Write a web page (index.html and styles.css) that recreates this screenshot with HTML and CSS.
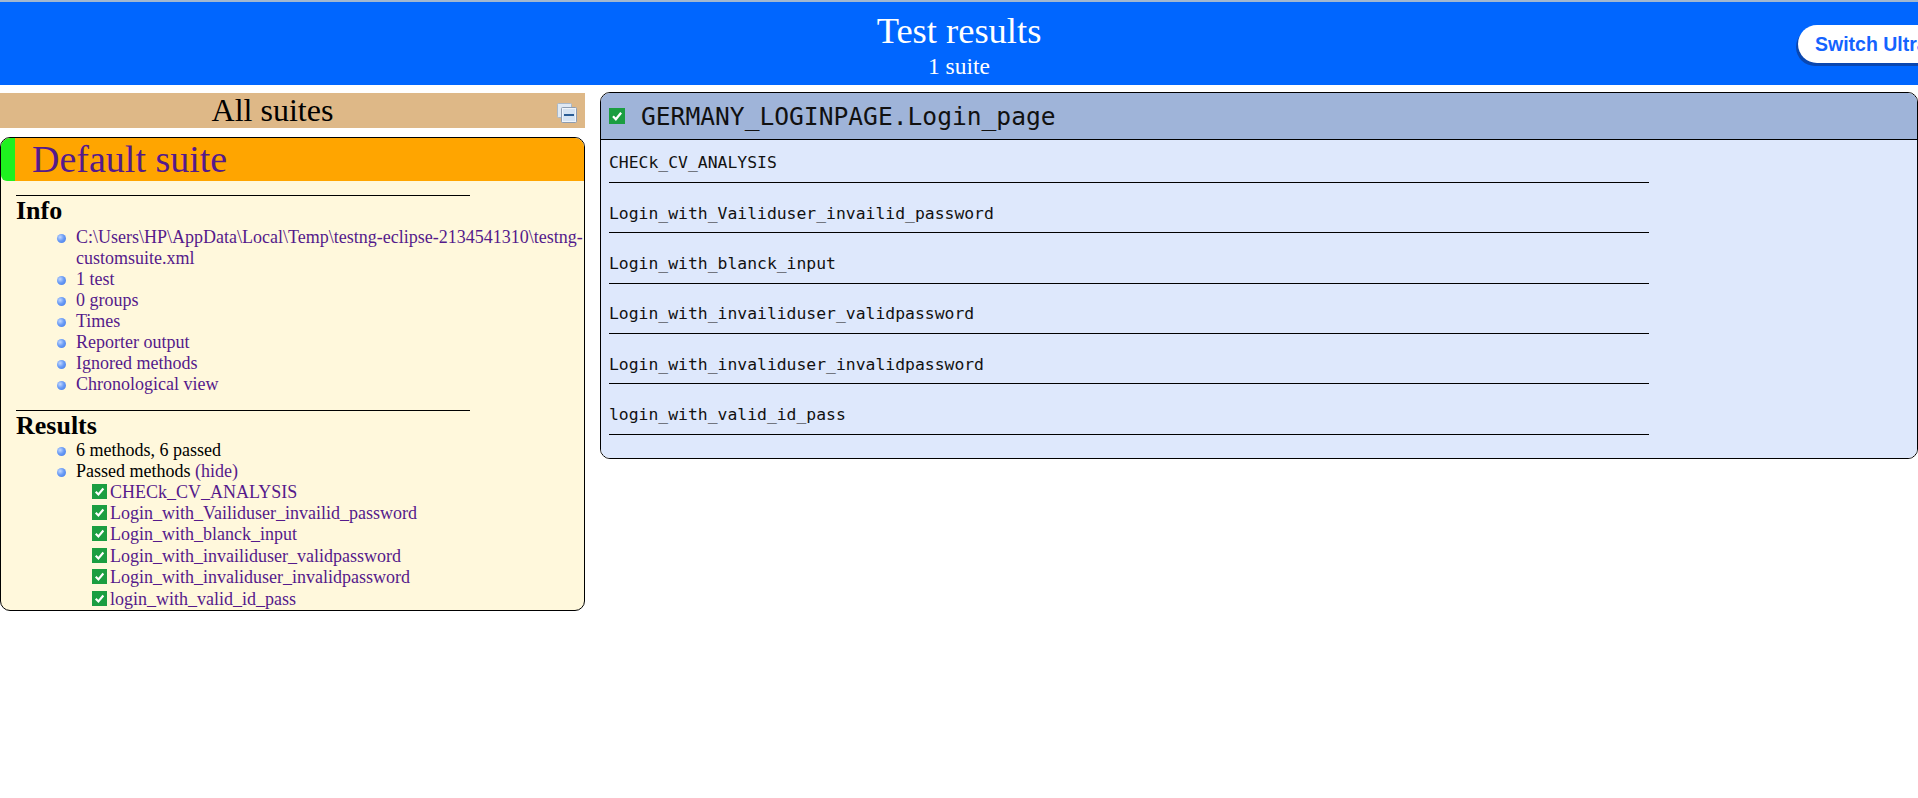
FILE: index.html
```html
<!DOCTYPE html>
<html>
<head>
<meta charset="utf-8">
<title>TestNG reports</title>
<link rel="stylesheet" href="styles.css">
</head>
<body>
<div class="top-banner">
  <div class="banner-title">Test results</div>
  <div class="banner-sub">1 suite</div>
  <button class="theme-button">Switch Ultra Theme</button>
</div>
<div class="main">
  <div class="navigator">
    <div class="nav-header">
      <span class="nav-title">All suites</span>
      <a class="collapse-all" href="#" title="Collapse/expand all the suites">
        <svg width="20" height="20" viewBox="0 0 20 20">
          <rect x="0.5" y="0.5" width="14" height="14" rx="1" fill="#dfe9f4" stroke="#a9b8c8"/>
          <rect x="4.5" y="4.5" width="15" height="15" rx="1" fill="#f0f5fb" stroke="#8d9db2"/>
          <rect x="6" y="6" width="12" height="12" fill="#d6e4f3"/>
          <rect x="7" y="11" width="10" height="2" fill="#2a5d95"/>
        </svg>
      </a>
    </div>
    <div class="suite">
      <div class="suite-header"><a class="suite-name" href="#">Default suite</a></div>
      <div class="suite-body">
        <div class="section-title">Info</div>
        <ul class="section-list">
          <li><a href="#">C:\Users\HP\AppData\Local\Temp\testng-eclipse-2134541310\testng-customsuite.xml</a></li>
          <li><a href="#">1 test</a></li>
          <li><a href="#">0 groups</a></li>
          <li><a href="#">Times</a></li>
          <li><a href="#">Reporter output</a></li>
          <li><a href="#">Ignored methods</a></li>
          <li><a href="#">Chronological view</a></li>
        </ul>
        <div class="section-title results-title">Results</div>
        <ul class="section-list">
          <li>6 methods, 6 passed</li>
          <li>Passed methods <a href="#">(hide)</a>
            <ul class="method-list">
              <li class="method-item"><svg class="check" width="15" height="15" viewBox="0 0 14 14"><rect width="14" height="14" fill="#1b9e41"/><path d="M3.5 7.2 L6 9.8 L10.6 4.2" fill="none" stroke="#fff" stroke-width="2"/></svg><a href="#">CHECk_CV_ANALYSIS</a></li>
              <li class="method-item"><svg class="check" width="15" height="15" viewBox="0 0 14 14"><rect width="14" height="14" fill="#1b9e41"/><path d="M3.5 7.2 L6 9.8 L10.6 4.2" fill="none" stroke="#fff" stroke-width="2"/></svg><a href="#">Login_with_Vailiduser_invailid_password</a></li>
              <li class="method-item"><svg class="check" width="15" height="15" viewBox="0 0 14 14"><rect width="14" height="14" fill="#1b9e41"/><path d="M3.5 7.2 L6 9.8 L10.6 4.2" fill="none" stroke="#fff" stroke-width="2"/></svg><a href="#">Login_with_blanck_input</a></li>
              <li class="method-item"><svg class="check" width="15" height="15" viewBox="0 0 14 14"><rect width="14" height="14" fill="#1b9e41"/><path d="M3.5 7.2 L6 9.8 L10.6 4.2" fill="none" stroke="#fff" stroke-width="2"/></svg><a href="#">Login_with_invailiduser_validpassword</a></li>
              <li class="method-item"><svg class="check" width="15" height="15" viewBox="0 0 14 14"><rect width="14" height="14" fill="#1b9e41"/><path d="M3.5 7.2 L6 9.8 L10.6 4.2" fill="none" stroke="#fff" stroke-width="2"/></svg><a href="#">Login_with_invaliduser_invalidpassword</a></li>
              <li class="method-item"><svg class="check" width="15" height="15" viewBox="0 0 14 14"><rect width="14" height="14" fill="#1b9e41"/><path d="M3.5 7.2 L6 9.8 L10.6 4.2" fill="none" stroke="#fff" stroke-width="2"/></svg><a href="#">login_with_valid_id_pass</a></li>
            </ul>
          </li>
        </ul>
      </div>
    </div>
  </div>
  <div class="main-panel">
    <div class="panel-header">
      <svg class="check" width="16" height="16" viewBox="0 0 14 14"><rect width="14" height="14" fill="#1b9e41"/><path d="M3.5 7.2 L6 9.8 L10.6 4.2" fill="none" stroke="#fff" stroke-width="2"/></svg>
      <span class="panel-title">GERMANY_LOGINPAGE.Login_page</span>
    </div>
    <div class="panel-content">
      <div class="method-row">CHECk_CV_ANALYSIS</div>
      <div class="method-row">Login_with_Vailiduser_invailid_password</div>
      <div class="method-row">Login_with_blanck_input</div>
      <div class="method-row">Login_with_invailiduser_validpassword</div>
      <div class="method-row">Login_with_invaliduser_invalidpassword</div>
      <div class="method-row">login_with_valid_id_pass</div>
    </div>
  </div>
</div>
</body>
</html>
```

FILE: styles.css
```css
* {
  box-sizing: border-box;
}

html,
body {
  margin: 0;
  padding: 0;
}

body {
  width: 1918px;
  height: 798px;
  overflow: hidden;
  background: #ffffff;
  color: #000000;
  font-family: "Liberation Serif", "Times New Roman", serif;
}

a {
  color: #551a8b;
  text-decoration: none;
}

/* ---------- top banner ---------- */
.top-banner {
  position: relative;
  height: 85px;
  border-top: 2px solid #a2b7cf;
  background: #0066ff;
  color: #ffffff;
  text-align: center;
  padding-top: 9px;
}

.banner-title {
  font-size: 36.5px;
  line-height: 40px;
}

.banner-sub {
  font-size: 23.5px;
  line-height: 26px;
  margin-top: 2px;
}

.theme-button {
  position: absolute;
  left: 1798px;
  top: 23px;
  width: 200px;
  height: 38px;
  padding: 0 0 0 17px;
  border: none;
  border-radius: 19px;
  background: #ffffff;
  color: #1463ff;
  font-family: "Liberation Sans", Arial, sans-serif;
  font-weight: bold;
  font-size: 19.5px;
  text-align: left;
  white-space: nowrap;
  box-shadow: -2px 3px 0 #0a47b0;
}

/* ---------- layout ---------- */
.main {
  display: flex;
  align-items: flex-start;
  margin-top: 7px;
}

.navigator {
  width: 585px;
  flex: none;
  padding-top: 1px;
}

.nav-header {
  display: flex;
  height: 35px;
  background: #deb887;
}

.nav-title {
  flex: 1;
  text-align: center;
  font-size: 32px;
  line-height: 35px;
}

.collapse-all {
  width: 40px;
  flex: none;
  padding: 10px 0 0 12px;
}

.collapse-all svg {
  display: block;
}

/* ---------- suite box ---------- */
.suite {
  margin-top: 9px;
  border: 1px solid #000000;
  border-radius: 10px;
  background: #fff8dc;
  overflow: hidden;
}

.suite-header {
  height: 43px;
  background: #ffa500;
  border-left: 14px solid #1ff11f;
  border-bottom-left-radius: 6px;
  padding-left: 17px;
}

.suite-name {
  font-size: 38px;
  line-height: 43px;
}

.suite-body {
  padding: 14px 0 0 15px;
}

.section-title {
  width: 454px;
  border-top: 1px solid #000000;
  font-size: 26px;
  font-weight: bold;
  line-height: 29px;
}

.results-title {
  margin-top: 15px;
}

.section-list {
  list-style: none;
  margin: 1.5px 0 0;
  padding: 0 0 0 60px;
  font-size: 18px;
  line-height: 21px;
}

.results-title + .section-list {
  margin-top: 0;
}

.section-list > li {
  position: relative;
}

.section-list > li::before {
  content: "";
  position: absolute;
  left: -19px;
  top: 7px;
  width: 9px;
  height: 9px;
  border-radius: 50%;
  background: radial-gradient(circle at 35% 35%, #c3d8ff 0%, #6b9cf5 45%, #3f77e6 100%);
}

.method-list {
  list-style: none;
  margin: 0;
  padding: 0 0 0 16px;
}

.method-item {
  display: flex;
  align-items: flex-start;
  gap: 3px;
  line-height: 21.4px;
}

.method-item .check {
  margin-top: 2px;
  flex: none;
}

.check {
  display: block;
}

/* ---------- main panel ---------- */
.main-panel {
  flex: 1;
  margin-left: 15px;
  border: 1px solid #000000;
  border-radius: 10px;
  overflow: hidden;
}

.panel-header {
  display: flex;
  align-items: center;
  gap: 16px;
  height: 47px;
  padding-left: 8px;
  background: #9fb4d9;
  border-bottom: 1px solid #000000;
}

.panel-title {
  font-family: "DejaVu Sans Mono", "Liberation Mono", monospace;
  font-size: 24.6px;
  color: #111111;
}

.panel-content {
  background: #dee8fc;
  padding: 13.3px 8px 2px;
}

.method-row {
  width: 80%;
  font-family: "DejaVu Sans Mono", "Liberation Mono", monospace;
  font-size: 16.4px;
  line-height: 19.4px;
  color: #111111;
  padding-bottom: 9.2px;
  border-bottom: 1px solid #000000;
  margin-bottom: 20.8px;
}
```
